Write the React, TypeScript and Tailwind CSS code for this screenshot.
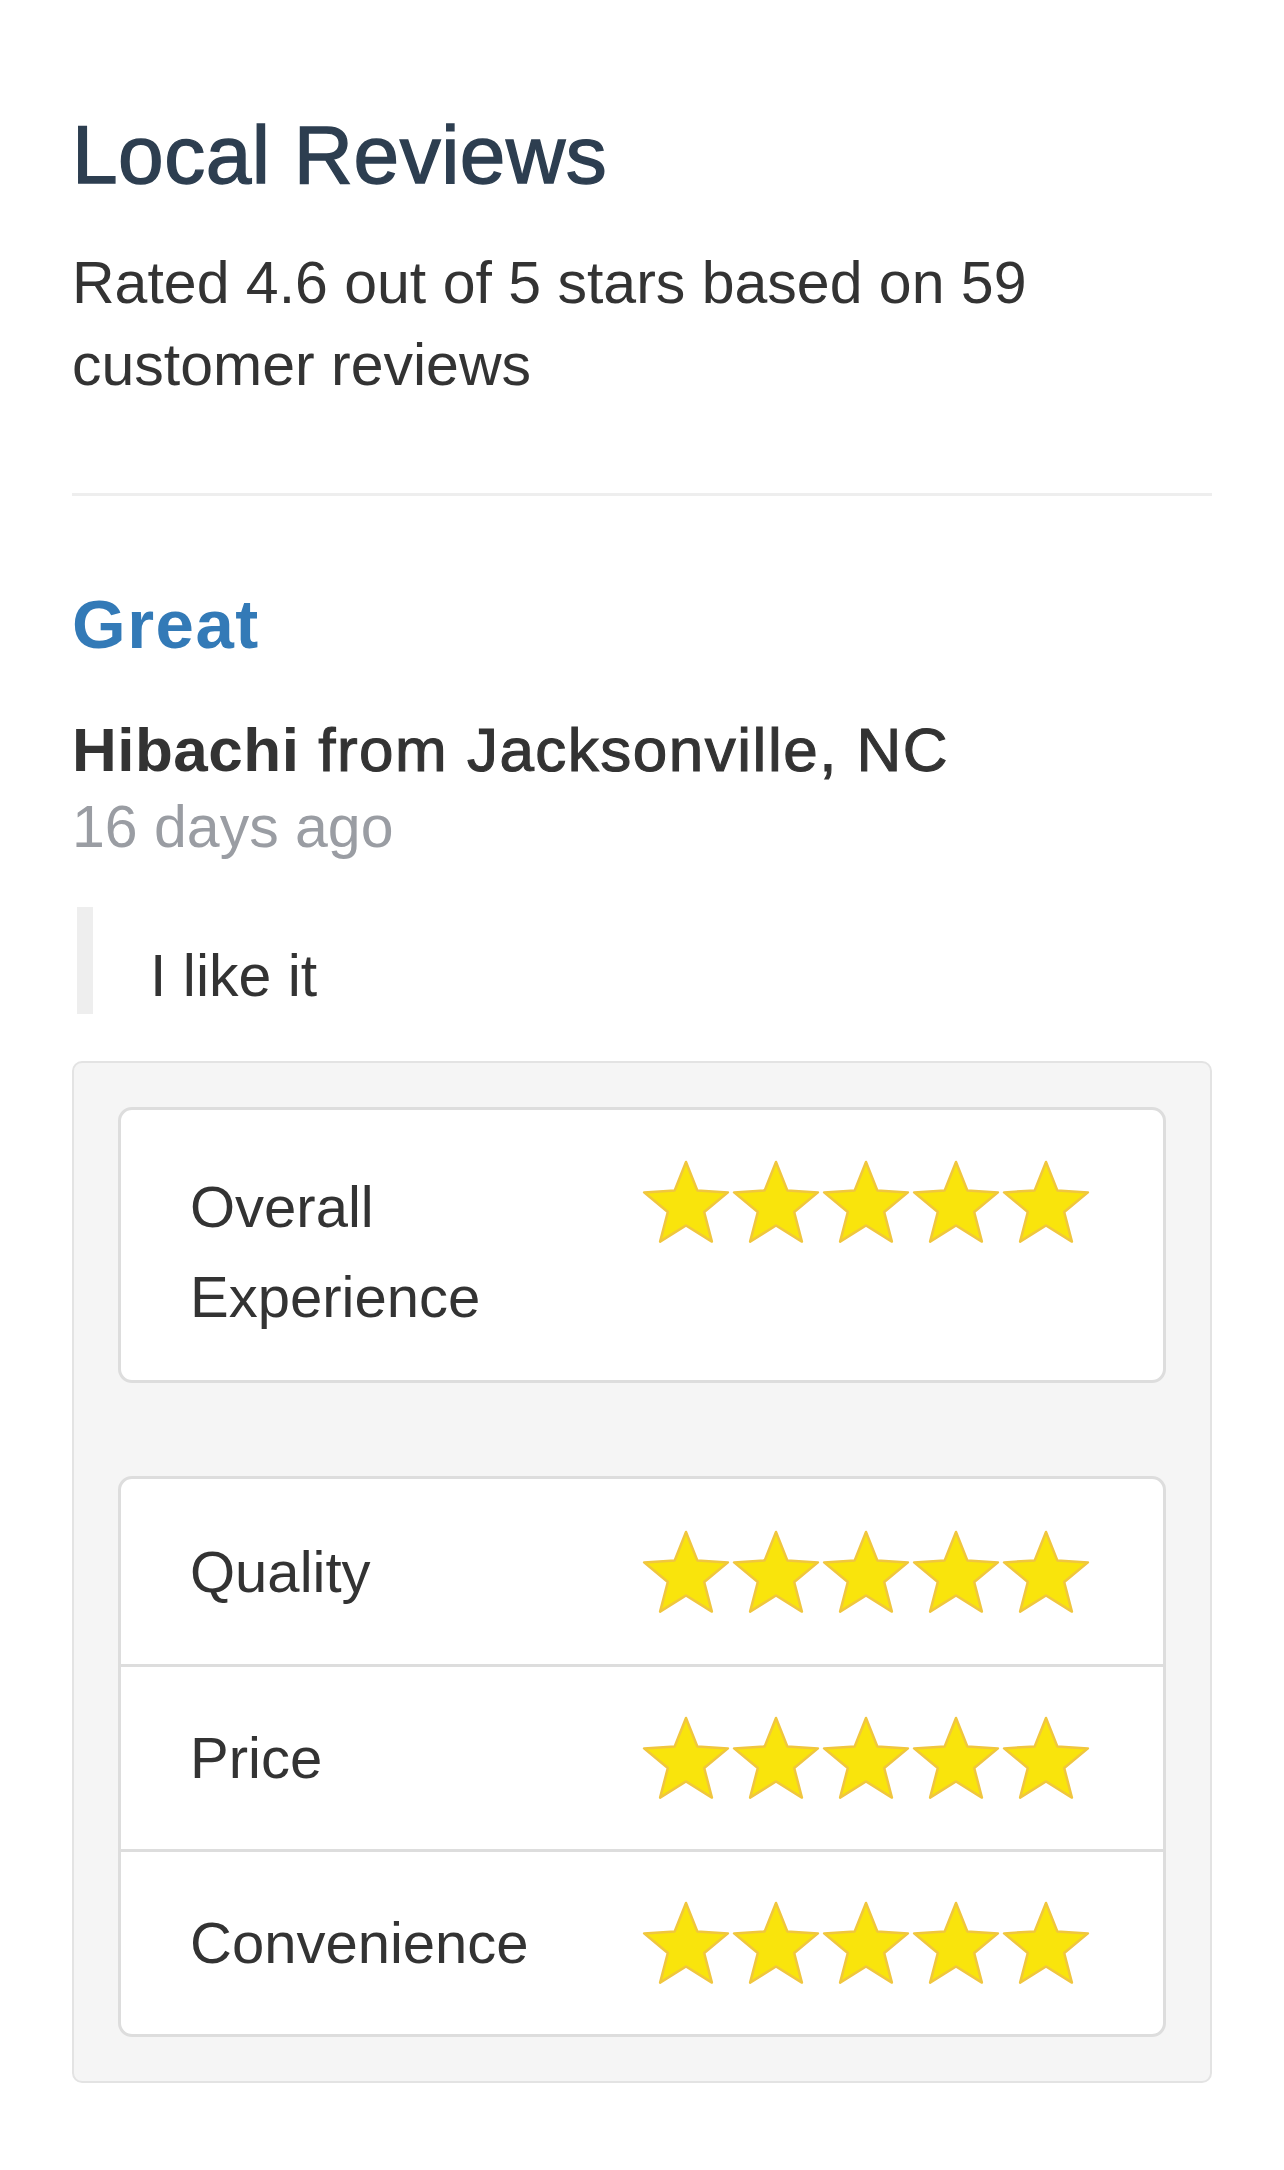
import React from "react";

function Star() {
  return (
    <svg width="90" height="86" viewBox="0 0 90 86" className="block shrink-0">
      <polygon
        points="45,3 56.3,31.4 86.9,33.4 63.2,53 70.9,82.6 45,66.5 19.1,82.6 26.8,53 3.1,33.4 33.7,31.4"
        fill="#f9e40c"
        stroke="#f0c63e"
        strokeWidth="2.5"
        strokeLinejoin="round"
      />
    </svg>
  );
}

function Stars({ count = 5 }: { count?: number }) {
  return (
    <div className="flex">
      {Array.from({ length: count }).map((_, i) => (
        <Star key={i} />
      ))}
    </div>
  );
}

const ratings = ["Quality", "Price", "Convenience"];

export default function App() {
  return (
    <div className="min-h-screen bg-white font-['Liberation_Sans',Arial,sans-serif] text-[#333333]">
      <div className="px-[72px] pt-[110px] pb-[90px]">
        {/* heading */}
        <h2 className="text-[82px] leading-[90px] tracking-[0.5px] text-[#2d3e50] [-webkit-text-stroke:1.4px]">
          Local Reviews
        </h2>
        <p className="mt-[42px] text-[59px] leading-[82px]">
          Rated 4.6 out of 5 stars based on 59 customer reviews
        </p>
        <hr className="mt-[87px] border-0 h-[3px] bg-[#eeeeee]" />

        {/* review */}
        <h3 className="mt-[91px] text-[69px] leading-[76px] font-bold tracking-[1.5px] text-[#337ab7]">
          Great
        </h3>
        <h4 className="mt-[53px] text-[62px] leading-[67px] text-[#333333]">
          <strong className="font-bold tracking-[0.5px]">Hibachi</strong>
          <span className="tracking-[1.5px] [-webkit-text-stroke:1.1px]"> from Jacksonville, NC</span>
        </h4>
        <div className="mt-[3px] text-[59px] leading-[82px] text-[#9a9da3]">16 days ago</div>

        <blockquote className="mt-[39px] ml-[5px] h-[107px] border-l-[16px] border-[#eeeeee] pl-[57px] pt-[37px]">
          <p className="text-[59px] leading-[64px]">I like it</p>
        </blockquote>

        {/* ratings well */}
        <div className="mt-[47px] rounded-[10px] border-2 border-[#e3e3e3] bg-[#f5f5f5] p-[44px]">
          <div className="flex items-start justify-between rounded-[14px] border-[3px] border-[#dddddd] bg-white pl-[69px] pr-[72px] pt-[52px] pb-[38px]">
            <div className="text-[58px] leading-[90px]">
              Overall
              <br />
              Experience
            </div>
            <div className="-mt-[3px]">
              <Stars />
            </div>
          </div>

          <div className="mt-[93px] overflow-hidden rounded-[14px] border-[3px] border-[#dddddd] bg-white">
            {ratings.map((label, i) => (
              <div
                key={label}
                className={`flex h-[185px] items-center justify-between pl-[69px] pr-[72px] ${
                  i > 0 ? "border-t-[3px] border-[#dddddd]" : ""
                }`}
              >
                <div className="text-[58px] leading-[90px]">{label}</div>
                <Stars />
              </div>
            ))}
          </div>
        </div>
      </div>
    </div>
  );
}
